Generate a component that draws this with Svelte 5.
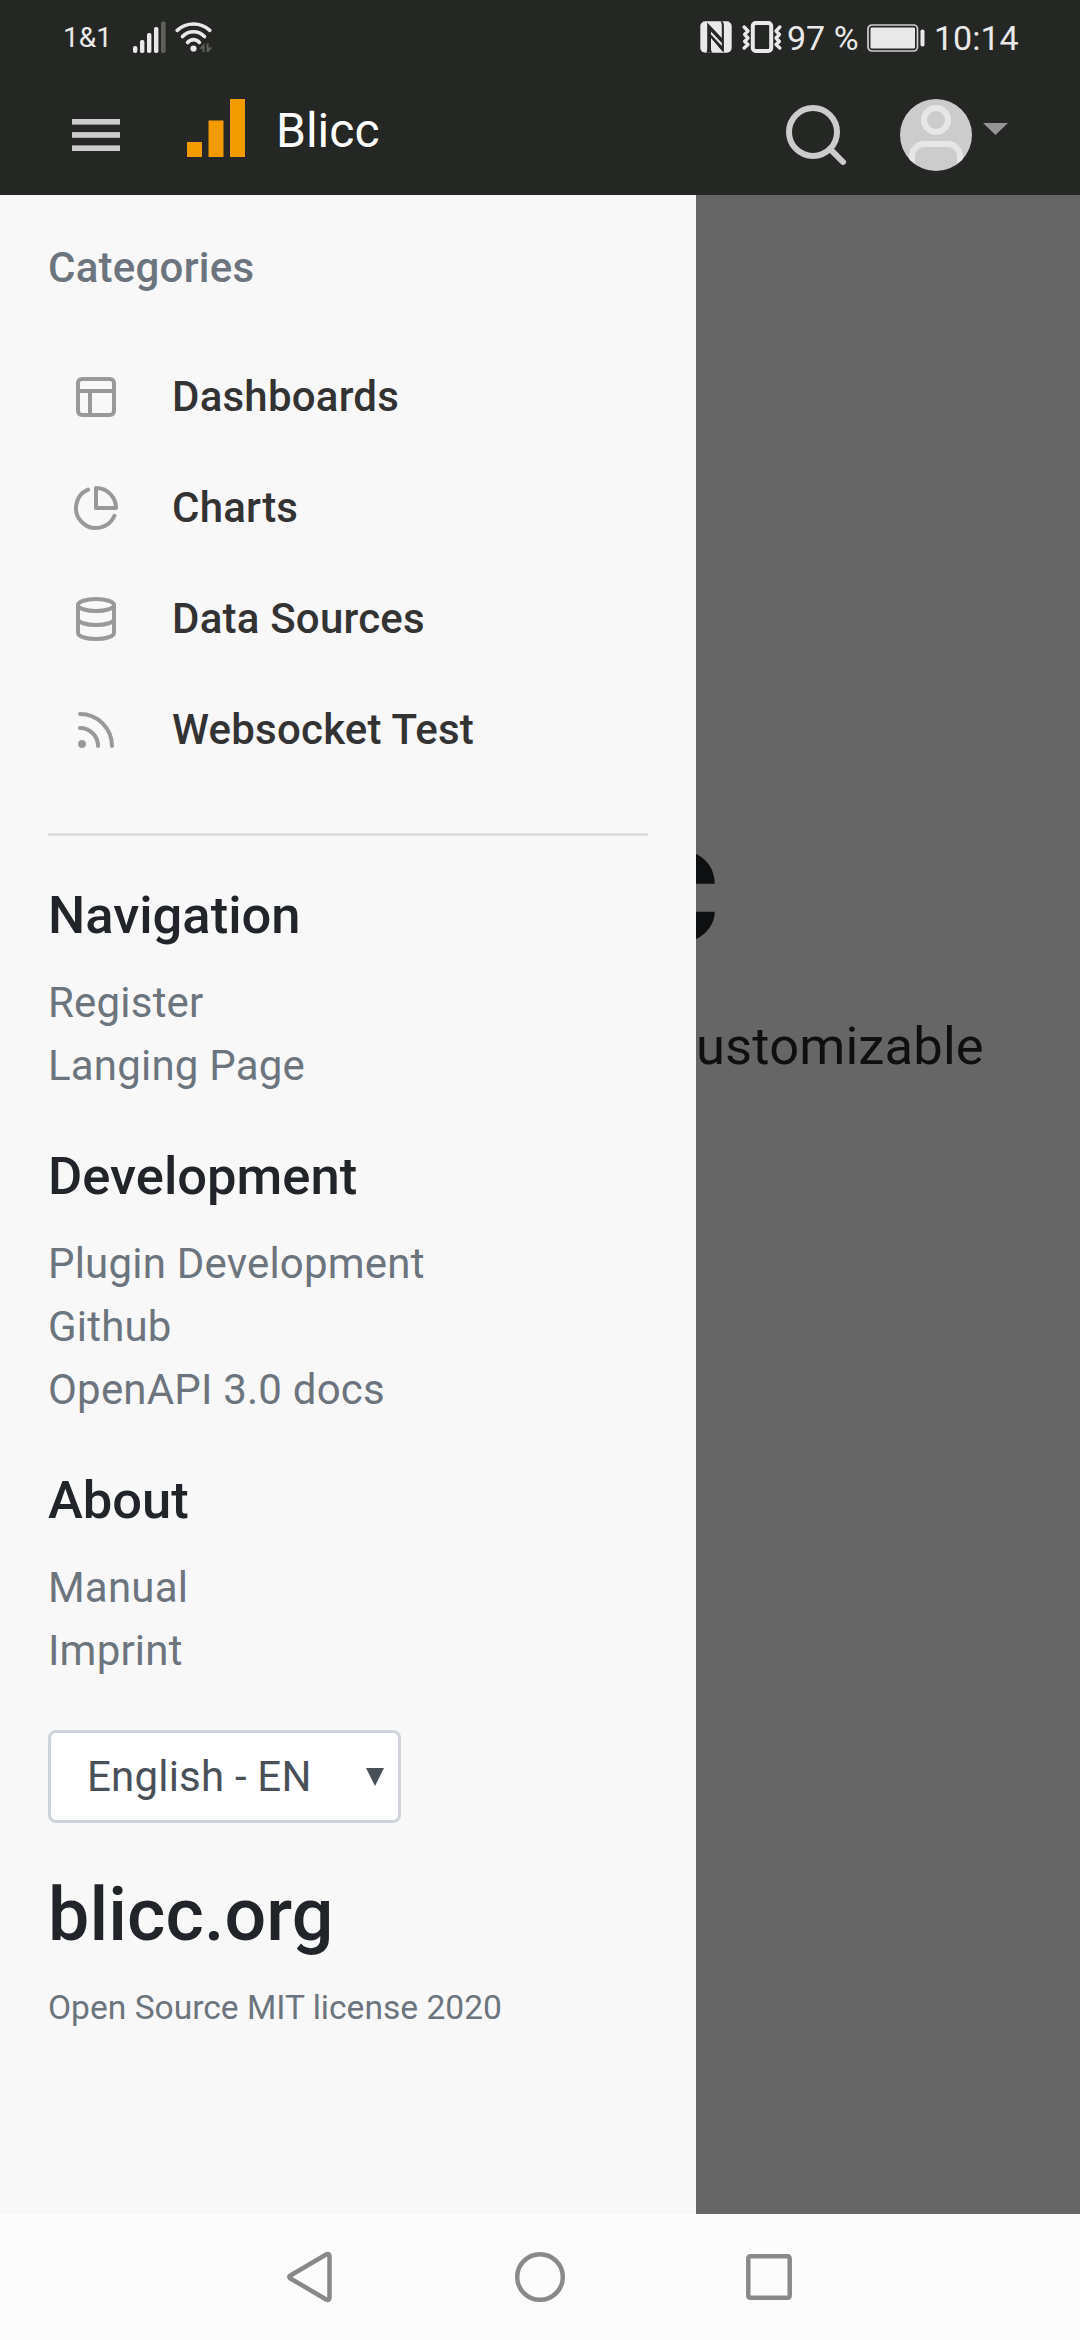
<script>
  const categories = [
    { label: 'Dashboards', icon: 'layout' },
    { label: 'Charts', icon: 'pie' },
    { label: 'Data Sources', icon: 'database' },
    { label: 'Websocket Test', icon: 'rss' }
  ];
  const groups = [
    { title: 'Navigation', links: ['Register', 'Langing Page'] },
    { title: 'Development', links: ['Plugin Development', 'Github', 'OpenAPI 3.0 docs'] },
    { title: 'About', links: ['Manual', 'Imprint'] }
  ];
</script>

<div class="screen">
  <div class="status">
    <div class="status-left">
      <span class="carrier">1&amp;1</span>
      <svg class="signal" width="34" height="32" viewBox="0 0 34 32" fill="#e9e9e9">
        <rect x="0" y="25" width="4.4" height="7" rx="2" />
        <rect x="7" y="19" width="4.4" height="13" rx="1.8" />
        <rect x="14" y="12" width="4.4" height="20" rx="1.8" />
        <rect x="21" y="6" width="4.4" height="26" rx="1.8" />
        <rect x="28" y="0.5" width="4.6" height="31.5" rx="1.8" fill="#5e605d" />
      </svg>
      <svg class="wifi" width="38" height="32" viewBox="0 0 38 32" fill="none" stroke="#e9e9e9" stroke-width="3.6" stroke-linecap="round">
        <path d="M2.2 9.4C11.5 .9 25.5 .9 34.8 9.4" />
        <path d="M7.5 15.6C13.6 9.2 23.4 9.2 29.5 15.6" />
        <path d="M12.6 21.5C16 17.6 21 17.6 24.4 21.5" />
        <circle cx="18.500" cy="27.500" r="3.100" fill="#e9e9e9" stroke="none" />
        <path d="M29.500 22v9h-2v-3.200h-3.200zM31.600 22.500v8.500h2l3.700-4.600h-3.700v-3.900z" fill="#5e605d" stroke="none" />
      </svg>
    </div>
    <div class="status-right">
      <svg class="nfc" width="32" height="32" viewBox="0 0 32 32">
        <rect x="0.300" y="0.300" width="31.400" height="31.400" rx="5" fill="#e9e9e9" />
        <path d="M7.200 1.500L21.800 17V5c0-2-.4-3.600-1.300-4.700h1.800c1 .8 1.600 2.300 1.600 4.200v26.200h-1.200L11 17v10.500c0 1.800.4 3 1.300 4.200H6.200c.7-1 1-2.300 1-4.200z" fill="#252724" />
        <path d="M11 10.500L21.800 22v3L11 13.500z" fill="#e9e9e9" />
      </svg>
      <svg class="vibrate" width="40" height="32" viewBox="0 0 40 32" fill="none" stroke="#e9e9e9">
        <rect x="10.800" y="2" width="18.400" height="28" rx="3" stroke-width="4" />
        <path d="M2.200 6l3.700 4-3.200 3.500 3.200 3.500-3.200 3.500 3.200 3-3.700 3.500M37.800 6l-3.700 4 3.200 3.500-3.200 3.500 3.200 3.500-3.200 3 3.700 3.500" stroke-width="3.400" stroke-linecap="round" stroke-linejoin="round" />
      </svg>
      <span class="battery-text">97 %</span>
      <svg class="battery" width="59" height="28" viewBox="0 0 59 28">
        <rect x="1" y="1" width="49.500" height="26" rx="4" fill="none" stroke="#d0d0d0" stroke-width="1.700" />
        <rect x="3.500" y="3.500" width="44.500" height="21" rx="1.200" fill="#e9e9e9" />
        <rect x="53.500" y="5.500" width="4" height="17" rx="1.800" fill="#e9e9e9" />
      </svg>
      <span class="clock">10:14</span>
    </div>
  </div>

  <header>
    <svg class="menu" width="48" height="32" viewBox="0 0 48 32" fill="#ccc">
      <rect y="0" width="48" height="5.600" />
      <rect y="13.100" width="48" height="5.700" />
      <rect y="26.400" width="48" height="5.600" />
    </svg>
    <svg class="logo" width="58" height="58" viewBox="0 0 58 58" fill="#f39c00">
      <rect x="0" y="43" width="15" height="15" />
      <rect x="21.500" y="21.500" width="15" height="36.500" />
      <rect x="43" y="0" width="15" height="58" />
    </svg>
    <span class="brand">Blicc</span>
    <svg class="search" width="72" height="72" viewBox="0 0 24 24" fill="none" stroke="#ccc" stroke-width="2" stroke-linecap="round">
      <circle cx="11" cy="11" r="8" />
      <path d="M21 21l-4.350-4.350" />
    </svg>
    <div class="avatar">
      <svg width="72" height="72" viewBox="0 0 24 24" fill="none" stroke="#e6e6e6" stroke-width="2" stroke-linecap="round">
        <path d="M20 21v-2a4 4 0 0 0-4-4H8a4 4 0 0 0-4 4v2" />
        <circle cx="12" cy="7" r="4" />
      </svg>
    </div>
    <svg class="caret" width="25" height="12" viewBox="0 0 25 12"><path d="M0 0h25L12.500 12z" fill="#949594" /></svg>
  </header>

  <div class="body">
    <aside>
      <h6>Categories</h6>
      <nav>
        {#each categories as item}
          <a class="item" href="#top">
            <svg width="48" height="48" viewBox="0 0 24 24" fill="none" stroke="#999" stroke-width="2" stroke-linecap="round" stroke-linejoin="round">
              {#if item.icon === 'layout'}
                <rect x="3" y="3" width="18" height="18" rx="2" />
                <path d="M3 9h18M9 21V9" />
              {:else if item.icon === 'pie'}
                <path d="M21.210 15.890A10 10 0 1 1 8 2.830" />
                <path d="M22 12A10 10 0 0 0 12 2v10z" />
              {:else if item.icon === 'database'}
                <ellipse cx="12" cy="5" rx="9" ry="3" />
                <path d="M21 12c0 1.660-4 3-9 3s-9-1.340-9-3" />
                <path d="M3 5v14c0 1.660 4 3 9 3s9-1.340 9-3V5" />
              {:else}
                <path d="M4 11a9 9 0 0 1 9 9M4 4a16 16 0 0 1 16 16" />
                <circle cx="5" cy="19" r="1" />
              {/if}
            </svg>
            <span>{item.label}</span>
          </a>
        {/each}
      </nav>
      <hr />
      {#each groups as group}
        <section>
          <h5>{group.title}</h5>
          {#each group.links as link}
            <a class="link" href="#top">{link}</a>
          {/each}
        </section>
      {/each}
      <div class="select">
        <span>English - EN</span>
        <svg width="18" height="18" viewBox="0 0 18 18"><path d="M0 0h18L9 18z" fill="#495057" /></svg>
      </div>
      <h3>blicc.org</h3>
      <p class="license">Open Source MIT license 2020</p>
    </aside>
    <main>
      <div class="hero">c</div>
      <div class="lead">ustomizable</div>
    </main>
  </div>

  <footer>
    <svg width="50" height="54" viewBox="0 0 50 54"><path d="M4 25.800L40.600 4.300Q43.500 3.400 43.500 6.500V47.500Q43.500 50.600 40.600 49.700L4 28.200Q2.600 27 4 25.800z" /></svg>
    <svg width="54" height="54" viewBox="0 0 54 54"><circle cx="27" cy="27" r="22.800" /></svg>
    <svg width="50" height="54" viewBox="0 0 50 54"><rect x="4.300" y="6.200" width="41.400" height="41.600" rx="2" /></svg>
  </footer>
</div>

<style>
  :global(body) { margin: 0; }
  .screen {
    width: 1080px; height: 2340px; display: flex; flex-direction: column; overflow: hidden;
    font-family: Roboto, "Liberation Sans", sans-serif; font-size: 42px; line-height: 63px; color: #212529;
  }
  svg { display: block; flex: none; }
  a { text-decoration: none; }
  .status {
    height: 75px; flex: none; background: #252724; color: #e9e9e9; box-sizing: border-box;
    display: flex; justify-content: space-between; align-items: flex-start; padding: 21px 60px 0 63px;
  }
  .status-left, .status-right { display: flex; align-items: flex-start; height: 32px; }
  .carrier { font-size: 28px; line-height: 34px; width: 70px; }
  .signal { margin-right: 8px; }
  .nfc { margin-right: 10px; }
  .vibrate { margin-right: 5px; }
  .battery-text, .clock { font-size: 34px; line-height: 34px; white-space: nowrap; }
  .battery-text { width: 80px; }
  .battery { margin: 3px 8px 0 0; }
  .clock { width: 86px; }
  header {
    height: 120px; flex: none; background: #252724; display: flex; align-items: flex-start;
    padding: 24px 72px 0; box-sizing: border-box;
  }
  .menu { margin: 20px 67px 0 0; }
  .logo { margin-right: 31px; }
  .brand { font-size: 48px; line-height: 60px; color: #fff; margin-top: 2px; flex: 1; }
  .search { margin-right: 48px; }
  .avatar { width: 72px; height: 72px; border-radius: 50%; background: #ccc; overflow: hidden; }
  .caret { margin: 24px 0 0 11px; }
  .body { height: 2019px; flex: none; display: flex; }
  aside { width: 696px; flex: none; box-sizing: border-box; background: #f8f8f8; padding: 48px; }
  h6, h5, h3, p { margin: 0; font-weight: 500; }
  h6 { font-size: 42px; line-height: 50px; margin-bottom: 48px; color: #6c757d; letter-spacing: 0.25px; }
  .item {
    display: flex; align-items: center; height: 63px; padding: 24px; color: #333; font-weight: 500; gap: 52px;
    letter-spacing: 0.22px;
  }
  hr { border: 0; height: 3px; background: #dedede; margin: 48px 0; }
  section { margin-bottom: 48px; }
  h5 { font-size: 52.5px; line-height: 63px; margin-bottom: 24px; }
  .link { display: block; color: #6c757d; letter-spacing: 0.2px; }
  .select {
    width: 353px; height: 93px; box-sizing: border-box; border: 3px solid #ced4da; border-radius: 8px; background: #fff;
    color: #495057; display: flex; align-items: center; justify-content: space-between; padding: 0 14px 0 36px;
    letter-spacing: 0.2px;
  }
  h3 { font-size: 73.5px; line-height: 88px; margin: 48px 0 24px; letter-spacing: 0.1px; }
  .license { font-size: 33.6px; line-height: 50px; font-weight: 400; color: #6c757d; }
  main { width: 384px; background: #666; color: #0d0f10; overflow: hidden; }
  .hero { font-size: 168px; line-height: 200px; font-weight: 500; margin: 589px 0 0 -64px; }
  .lead { font-size: 52.5px; line-height: 79px; margin: 23px 0 0 0; letter-spacing: 0.15px; }
  footer { height: 126px; flex: none; background: #fcfcfc; display: flex; justify-content: center; align-items: center; gap: 177px; }
  footer svg { fill: none; stroke: #898989; stroke-width: 4.500; stroke-linejoin: round; }
</style>
